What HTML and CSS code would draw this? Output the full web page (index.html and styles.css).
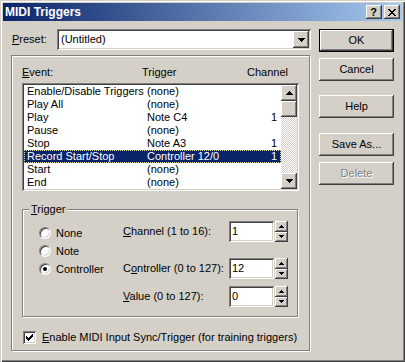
FILE: index.html
```html
<!DOCTYPE html>
<html lang="en">
<head>
  <meta charset="UTF-8" />
  <title>MIDI Triggers</title>
  <link rel="stylesheet" href="styles.css">
</head>
<body>
  <div class="dialog">
    <!-- title bar -->
    <div class="titlebar">
      <span class="title">MIDI Triggers</span>
      <div class="caption-btns">
        <span class="cap-btn cap-help">?</span>
        <span class="cap-btn">
          <svg width="8" height="7" viewBox="0 0 8 7"><path d="M0 0h2v1h1v1h2V1h1V0h2v1H7v1H6v1H5v1h1v1h1v1h1v1H6V6H5V5H3v1H2v1H0V6h1V5h1V4h1V3H2V2H1V1H0z"/></svg>
        </span>
      </div>
    </div>

    <div class="client">
      <div class="main">
        <div class="preset-row">
          <label class="preset-label"><u>P</u>reset:</label>
          <div class="combo">
            <span class="combo-text">(Untitled)</span>
            <span class="drop-btn">
              <svg width="7" height="4" viewBox="0 0 7 4"><path d="M0 0h7v1H6v1H5v1H4v1H3V3H2V2H1V1H0z"/></svg>
            </span>
          </div>
        </div>

        <div class="frame">
          <div class="list-head">
            <span><u>E</u>vent:</span>
            <span>Trigger</span>
            <span>Channel</span>
          </div>

          <div class="listbox">
            <div class="rows">
              <div class="row"><span>Enable/Disable Triggers</span><span>(none)</span><span></span></div>
              <div class="row"><span>Play All</span><span>(none)</span><span></span></div>
              <div class="row"><span>Play</span><span>Note C4</span><span>1</span></div>
              <div class="row"><span>Pause</span><span>(none)</span><span></span></div>
              <div class="row"><span>Stop</span><span>Note A3</span><span>1</span></div>
              <div class="row selected"><span>Record Start/Stop</span><span>Controller 12/0</span><span>1</span></div>
              <div class="row"><span>Start</span><span>(none)</span><span></span></div>
              <div class="row"><span>End</span><span>(none)</span><span></span></div>
            </div>
            <div class="vscroll">
              <span class="sb-btn">
                <svg width="7" height="4" viewBox="0 0 7 4"><path d="M3 0h1v1h1v1h1v1h1v1H0V3h1V2h1V1h1z"/></svg>
              </span>
              <span class="sb-thumb"></span>
              <span class="sb-track"></span>
              <span class="sb-btn">
                <svg width="7" height="4" viewBox="0 0 7 4"><path d="M0 0h7v1H6v1H5v1H4v1H3V3H2V2H1V1H0z"/></svg>
              </span>
            </div>
          </div>

          <div class="group">
            <span class="group-label"><u>T</u>rigger</span>
            <div class="group-body">
              <div class="radios">
                <div class="radio"><span class="radio-dot"></span>None</div>
                <div class="radio"><span class="radio-dot"></span>Note</div>
                <div class="radio"><span class="radio-dot checked"></span>Controller</div>
              </div>
              <div class="fields">
                <div class="field">
                  <span class="field-label"><u>C</u>hannel (1 to 16):</span>
                  <span class="edit">1</span>
                  <span class="spin">
                    <span class="spin-btn"><svg width="5" height="3" viewBox="0 0 5 3"><path d="M2 0h1v1h1v1h1v1H0V2h1V1h1z"/></svg></span>
                    <span class="spin-btn"><svg width="5" height="3" viewBox="0 0 5 3"><path d="M0 0h5v1H4v1H3v1H2V2H1V1H0z"/></svg></span>
                  </span>
                </div>
                <div class="field field-ctl">
                  <span class="field-label">C<u>o</u>ntroller (0 to 127):</span>
                  <span class="edit">12</span>
                  <span class="spin">
                    <span class="spin-btn"><svg width="5" height="3" viewBox="0 0 5 3"><path d="M2 0h1v1h1v1h1v1H0V2h1V1h1z"/></svg></span>
                    <span class="spin-btn"><svg width="5" height="3" viewBox="0 0 5 3"><path d="M0 0h5v1H4v1H3v1H2V2H1V1H0z"/></svg></span>
                  </span>
                </div>
                <div class="field field-val">
                  <span class="field-label"><u>V</u>alue (0 to 127):</span>
                  <span class="edit">0</span>
                  <span class="spin">
                    <span class="spin-btn"><svg width="5" height="3" viewBox="0 0 5 3"><path d="M2 0h1v1h1v1h1v1H0V2h1V1h1z"/></svg></span>
                    <span class="spin-btn"><svg width="5" height="3" viewBox="0 0 5 3"><path d="M0 0h5v1H4v1H3v1H2V2H1V1H0z"/></svg></span>
                  </span>
                </div>
              </div>
            </div>
          </div>

          <label class="check-row">
            <span class="checkbox">
              <svg width="7" height="7" viewBox="0 0 7 7"><path d="M6 0h1v3H6v1H5v1H4v1H3v1H2V6H1V5H0V2h1v1h1v1h1V3h1V2h1V1h1z"/></svg>
            </span>
            <span><u>E</u>nable MIDI Input Sync/Trigger (for training triggers)</span>
          </label>
        </div>
      </div>

      <!-- command buttons -->
      <div class="buttons">
        <button class="btn default">OK</button>
        <button class="btn b-cancel">Cancel</button>
        <button class="btn b-help">Help</button>
        <button class="btn b-save">Save As...</button>
        <button class="btn b-delete" disabled>Delete</button>
      </div>
    </div>
  </div>
</body>
</html>
```

FILE: styles.css
```css
/* ===== classic win2000 palette ===== */
:root {
  --face:   #d4d0c8;
  --light:  #fff;
  --shadow: #808080;
  --dark:   #404040;
  --select: #0a246a;
}

* { box-sizing: border-box; margin: 0; padding: 0; }
body {
  width: 405px;
  height: 362px;
  overflow: hidden;
  background: var(--face);
  color: #000;
  font: 11px/13px "Liberation Sans", Arial, sans-serif;
}
u { text-decoration: underline; text-underline-offset: 1px; }

/* raised & sunken edges */
.raised, .cap-btn, .drop-btn, .sb-btn, .sb-thumb, .spin-btn, .btn {
  background: var(--face);
  box-shadow: inset -1px -1px var(--dark), inset 1px 1px var(--light),
              inset -2px -2px var(--shadow);
}
.combo, .listbox, .edit, .checkbox {
  background: #fff;
  box-shadow: inset 1px 1px var(--shadow), inset -1px -1px var(--light),
              inset 2px 2px var(--dark), inset -2px -2px var(--face);
}

/* ===== window frame ===== */
.dialog {
  width: 405px;
  height: 362px;
  padding: 3px;
  box-shadow: inset 1px 1px var(--face), inset 2px 2px var(--light),
              inset -1px -1px var(--dark), inset -2px -2px var(--shadow);
}
.titlebar {
  height: 18px;
  margin-bottom: 1px;
  padding: 0 2px;
  display: flex;
  align-items: center;
  background: linear-gradient(to right, #0a246a, #a6caf0);
}
.title { color: #fff; font-weight: bold; font-size: 12px; }
.caption-btns { margin-left: auto; display: flex; gap: 2px; }
.cap-btn {
  width: 16px;
  height: 14px;
  display: flex;
  align-items: center;
  justify-content: center;
}
.cap-help { font-weight: bold; font-size: 11px; line-height: 14px; padding-right: 1px; }

/* ===== client area ===== */
.client { display: flex; gap: 8px; padding: 7px 8px 0; }
.main { width: 300px; }

.preset-row { display: flex; align-items: center; height: 21px; }
.preset-label { width: 46px; padding-left: 1px; }
.combo {
  width: 254px;
  height: 21px;
  padding: 2px;
  display: flex;
  align-items: center;
}
.combo-text { flex: 1; padding-left: 2px; }
.drop-btn, .sb-btn {
  width: 16px;
  height: 17px;
  display: flex;
  align-items: center;
  justify-content: center;
}

/* etched frame */
.frame {
  width: 299px;
  margin-top: 5px;
  padding: 10px 0 6px 10px;
  border: 1px solid var(--shadow);
  box-shadow: inset 1px 1px var(--light), 1px 1px var(--light);
}
.list-head {
  display: grid;
  grid-template-columns: 120px 105px auto;
  height: 13px;
  margin-bottom: 4px;
}

/* listbox */
.listbox { width: 277px; height: 108px; padding: 2px; display: flex; }
.rows { flex: 1; }
.row {
  display: grid;
  grid-template-columns: 120px 1fr auto;
  height: 13px;
  padding: 0 4px 0 3px;
  white-space: nowrap;
}
.row.selected {
  background: var(--select);
  color: #fff;
  outline: 1px dotted #e8e0a0;
  outline-offset: -1px;
}
.vscroll { width: 16px; display: flex; flex-direction: column; }
.sb-btn { height: 16px; }
.sb-thumb { height: 16px; }
.sb-track {
  flex: 1;
  background: repeating-conic-gradient(var(--face) 0 25%, #fff 0 50%) 0 0 / 2px 2px;
}

/* trigger group */
.group {
  width: 276px;
  height: 108px;
  margin-top: 18px;
  border: 1px solid var(--shadow);
  box-shadow: inset 1px 1px var(--light), 1px 1px var(--light);
}
.group-label {
  display: block;
  width: fit-content;
  margin: -7px 0 0 6px;
  padding: 0 2px;
  background: var(--face);
}
.group-body { display: flex; padding-top: 5px; }
.radios { width: 100px; padding: 3px 0 0 16px; }
.radio { display: flex; align-items: center; gap: 5px; height: 18px; }
.radio-dot {
  width: 12px;
  height: 12px;
  border-radius: 50%;
  background: #fff;
  border: 1px solid;
  border-color: var(--shadow) var(--light) var(--light) var(--shadow);
  box-shadow: inset 1px 1px var(--dark), inset -1px -1px var(--face);
  display: flex;
  align-items: center;
  justify-content: center;
}
.radio-dot.checked::after {
  content: "";
  width: 4px;
  height: 4px;
  border-radius: 50%;
  background: #000;
}

.field { display: flex; align-items: center; height: 21px; }
.field-ctl { margin-top: 16px; }
.field-val { margin-top: 7px; }
.field-label { width: 106px; }
.edit { width: 45px; height: 21px; padding: 4px 3px; }
.spin { width: 13px; height: 21px; margin-left: 1px; display: flex; flex-direction: column; }
.spin-btn {
  flex: 1;
  display: flex;
  align-items: center;
  justify-content: center;
}

.check-row {
  display: flex;
  align-items: center;
  gap: 6px;
  height: 13px;
  margin: 14px 0 0 1px;
}
.checkbox {
  width: 13px;
  height: 13px;
  display: flex;
  align-items: center;
  justify-content: center;
}

/* ===== command buttons ===== */
.buttons { width: 75px; display: flex; flex-direction: column; }
.btn {
  height: 23px;
  border: none;
  font: inherit;
  color: #000;
}
.btn.default {
  border: 1px solid #000;
  box-shadow: inset -1px -1px var(--dark), inset 1px 1px var(--light),
              inset -2px -2px var(--shadow);
}
.b-cancel { margin-top: 6px; }
.b-help   { margin-top: 14px; }
.b-save   { margin-top: 15px; }
.b-delete { margin-top: 6px; color: var(--shadow); text-shadow: 1px 1px #fff; }
```
